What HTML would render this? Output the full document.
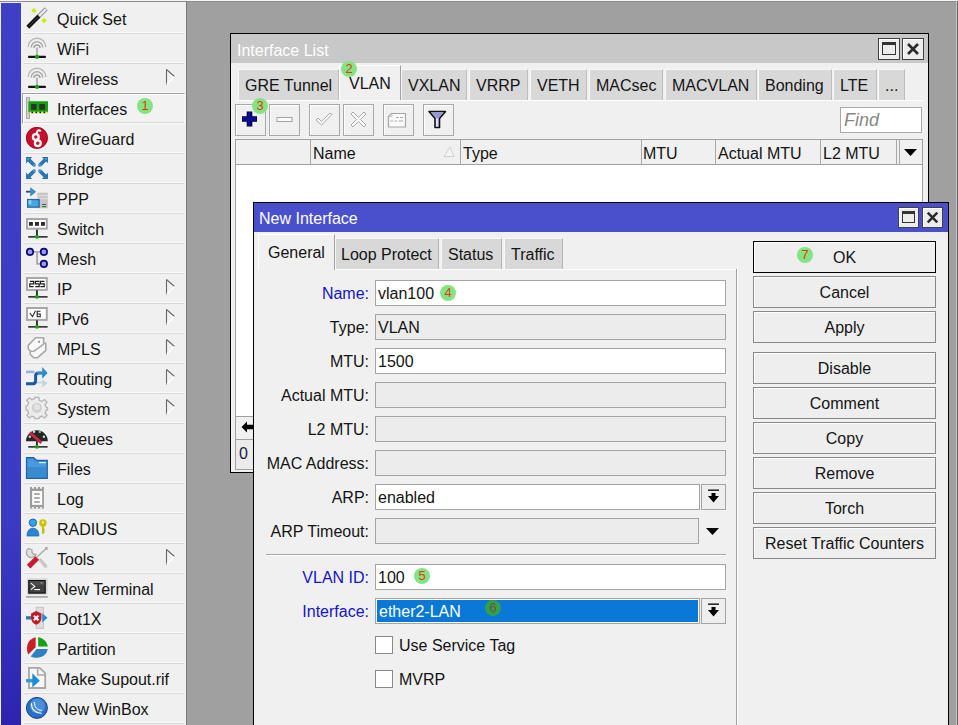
<!DOCTYPE html>
<html><head><meta charset="utf-8"><style>
*{margin:0;padding:0;box-sizing:border-box}
html,body{width:958px;height:725px;overflow:hidden;background:#a0a0a0;font-family:"Liberation Sans",sans-serif;font-size:16px;color:#111}
.a{position:absolute}
.t{position:absolute;font-size:16px;line-height:18px;white-space:nowrap;color:#141414}
svg{position:absolute;overflow:visible}
.badge{position:absolute;width:16px;height:16px;border-radius:50%;background:#84e484;color:#e03a10;font-size:13px;line-height:16px;text-align:center}
</style></head><body>
<div class="a" style="left:0px;top:0px;width:958px;height:1px;background:#f4f4f4"></div>
<div class="a" style="left:0px;top:1px;width:958px;height:1px;background:#8c8c8c"></div>
<div class="a" style="left:0px;top:2px;width:22px;height:723px;background:#f0f0f0"></div>
<div class="a" style="left:1px;top:3px;width:20px;height:722px;background:linear-gradient(#3e3ec6 0%,#3b3ac4 72%,#2c24b0 100%)"></div>
<div class="a" style="left:22px;top:2px;width:164px;height:723px;background:#f0f0f0"></div>
<div class="a" style="left:186px;top:1px;width:1px;height:724px;background:#787878"></div>
<div class="a" style="left:956px;top:1px;width:1px;height:724px;background:#c4c4c4"></div>
<div class="a" style="left:957px;top:1px;width:1px;height:724px;background:#6a6a6a"></div>
<div class="a" style="left:24px;top:32px;width:160px;height:1px;background:#fafafa"></div>
<div class="a" style="left:24px;top:33px;width:160px;height:1px;background:#d8d8d8"></div>
<div class="t" style="left:57px;top:11px;">Quick Set</div>
<svg style="left:26px;top:7px" width="22" height="22" viewBox="0 0 22 22"><path d="M8 0.8 L9 2.8 L11 3.6 L9 4.4 L8 6.6 L7 4.4 L5 3.6 L7 2.8 Z" fill="#d4ea20"/><circle cx="8" cy="3.6" r="2.2" fill="#d4ea20"/><path d="M18 10.8 L19 12.8 L21 13.6 L19 14.4 L18 16.6 L17 14.4 L15 13.6 L17 12.8 Z" fill="#d4ea20"/><circle cx="18" cy="13.6" r="2.2" fill="#d4ea20"/><line x1="1.8" y1="20.2" x2="13" y2="9" stroke="#141414" stroke-width="4.2"/><line x1="2.6" y1="19.4" x2="12.5" y2="9.5" stroke="#3a3a3a" stroke-width="1"/><line x1="13" y1="9" x2="20.2" y2="1.8" stroke="#888" stroke-width="4.2"/><line x1="13.2" y1="8.8" x2="20" y2="2" stroke="#ececec" stroke-width="2.4"/></svg>
<div class="a" style="left:24px;top:62px;width:160px;height:1px;background:#fafafa"></div>
<div class="a" style="left:24px;top:63px;width:160px;height:1px;background:#d8d8d8"></div>
<div class="t" style="left:57px;top:41px;">WiFi</div>
<svg style="left:26px;top:37px" width="22" height="22" viewBox="0 0 22 22"><path d="M2.2 10 A8.8 8.8 0 0 1 19.8 10" fill="none" stroke="#b8b8b8" stroke-width="1.4"/><path d="M5.2 10.5 A5.8 5.8 0 0 1 16.8 10.5" fill="none" stroke="#a8a8a8" stroke-width="1.4"/><path d="M8 11 A3 3 0 0 1 14 11" fill="none" stroke="#a0a0a0" stroke-width="1.4"/><rect x="10.2" y="10.5" width="1.6" height="9" fill="#a8a8a8"/><rect x="2" y="18.8" width="18" height="2.2" rx="1" fill="#141414"/><circle cx="11" cy="19.9" r="2.1" fill="#18a018"/></svg>
<div class="a" style="left:24px;top:92px;width:160px;height:1px;background:#fafafa"></div>
<div class="a" style="left:24px;top:93px;width:160px;height:1px;background:#d8d8d8"></div>
<div class="t" style="left:57px;top:71px;">Wireless</div>
<svg style="left:26px;top:67px" width="22" height="22" viewBox="0 0 22 22"><path d="M2.2 10 A8.8 8.8 0 0 1 19.8 10" fill="none" stroke="#b8b8b8" stroke-width="1.4"/><path d="M5.2 10.5 A5.8 5.8 0 0 1 16.8 10.5" fill="none" stroke="#a8a8a8" stroke-width="1.4"/><path d="M8 11 A3 3 0 0 1 14 11" fill="none" stroke="#a0a0a0" stroke-width="1.4"/><rect x="10.2" y="10.5" width="1.6" height="9" fill="#a8a8a8"/><rect x="2" y="18.8" width="18" height="2.2" rx="1" fill="#141414"/><circle cx="11" cy="19.9" r="2.1" fill="#18a018"/></svg>
<svg style="left:165px;top:68px" width="11" height="18" viewBox="0 0 11 18"><path d="M1.5 1.5 L1.5 17" stroke="#6a6a6a" stroke-width="1.1"/><path d="M1.5 1.5 L9.5 8.5" stroke="#6a6a6a" stroke-width="1.1"/><path d="M9.5 8.5 L1.5 16.5" stroke="#fff" stroke-width="1.2"/></svg>
<div class="a" style="left:22px;top:93px;width:163px;height:31px;background:#f2f2f2;border-top:1px solid #a0a0a0;border-left:1px solid #a0a0a0;border-bottom:1px solid #fafafa;border-right:1px solid #fafafa;box-shadow:inset 1px 1px 0 #fcfcfc, inset 0 -1px 0 #dadada"></div>
<div class="t" style="left:57px;top:101px;">Interfaces</div>
<svg style="left:26px;top:97px" width="22" height="22" viewBox="0 0 22 22"><rect x="0.6" y="0.6" width="2.8" height="20.8" fill="#d4d4d4" stroke="#9a9a9a" stroke-width="0.9"/><rect x="2.4" y="4" width="19.6" height="11.4" fill="#14a014"/><rect x="2.4" y="4" width="19.6" height="1" fill="#3ac03a"/><rect x="5.2" y="7" width="5.3" height="5.8" fill="#263626"/><rect x="13.3" y="7" width="5.8" height="5.8" fill="#263626"/><rect x="3.5" y="14.6" width="18" height="1.6" fill="#d8f050"/><rect x="5.5" y="14.6" width="1.6" height="1.6" fill="#111"/><rect x="9.5" y="14.6" width="1.6" height="1.6" fill="#111"/><rect x="13.5" y="14.6" width="1.6" height="1.6" fill="#111"/><rect x="17.5" y="14.6" width="1.6" height="1.6" fill="#111"/></svg>
<div class="a" style="left:24px;top:152px;width:160px;height:1px;background:#fafafa"></div>
<div class="a" style="left:24px;top:153px;width:160px;height:1px;background:#d8d8d8"></div>
<div class="t" style="left:57px;top:131px;">WireGuard</div>
<svg style="left:26px;top:127px" width="22" height="22" viewBox="0 0 22 22"><circle cx="10.9" cy="10.9" r="10.9" fill="#c8102e"/><circle cx="10.9" cy="10.9" r="10.4" fill="none" stroke="#9a0a22" stroke-width="1"/><circle cx="9.8" cy="10" r="2.9" fill="none" stroke="#fff" stroke-width="2.3"/><circle cx="11.8" cy="16.3" r="2.9" fill="none" stroke="#fff" stroke-width="2.3"/><path d="M9.8 6.8 C11.5 6 10.5 4.5 12 3.5 C13 3 14 3.5 14.8 4.2" fill="none" stroke="#fff" stroke-width="2"/></svg>
<div class="a" style="left:24px;top:182px;width:160px;height:1px;background:#fafafa"></div>
<div class="a" style="left:24px;top:183px;width:160px;height:1px;background:#d8d8d8"></div>
<div class="t" style="left:57px;top:161px;">Bridge</div>
<svg style="left:26px;top:157px" width="22" height="22" viewBox="0 0 22 22"><g fill="#2a74b0"><path d="M0 0 L6.2 0 L4.4 1.8 L9.6 7 L9.6 9.5 L7 9.5 L1.8 4.4 L0 6.2 Z"/><path d="M0 0 L6.2 0 L4.4 1.8 L9.6 7 L9.6 9.5 L7 9.5 L1.8 4.4 L0 6.2 Z" transform="translate(22 0) scale(-1 1)"/><path d="M0 0 L6.2 0 L4.4 1.8 L9.6 7 L9.6 9.5 L7 9.5 L1.8 4.4 L0 6.2 Z" transform="translate(0 22) scale(1 -1)"/><path d="M0 0 L6.2 0 L4.4 1.8 L9.6 7 L9.6 9.5 L7 9.5 L1.8 4.4 L0 6.2 Z" transform="translate(22 22) scale(-1 -1)"/></g><g fill="#50a8d8"><circle cx="2" cy="2" r="1"/><circle cx="20" cy="2" r="1"/><circle cx="8" cy="8" r="1"/><circle cx="14" cy="8" r="1"/><circle cx="8" cy="14" r="1"/><circle cx="14" cy="14" r="1"/></g></svg>
<div class="a" style="left:24px;top:212px;width:160px;height:1px;background:#fafafa"></div>
<div class="a" style="left:24px;top:213px;width:160px;height:1px;background:#d8d8d8"></div>
<div class="t" style="left:57px;top:191px;">PPP</div>
<svg style="left:26px;top:187px" width="22" height="22" viewBox="0 0 22 22"><rect x="0" y="3.8" width="4.8" height="1.8" fill="#304a80"/><path d="M4.3 0.2 L10 4.7 L4.3 9.6 Z" fill="#2e7ab0"/><path d="M5.2 2.2 L8 4.7 L5.2 7.2 Z" fill="#4a9ad0"/><rect x="11.3" y="5.7" width="10.5" height="15.5" fill="#c4c4c4"/><rect x="11.3" y="8" width="10.5" height="1.2" fill="#dedede"/><rect x="11.3" y="11" width="10.5" height="1.2" fill="#dedede"/><rect x="16.2" y="17" width="4" height="1" fill="#555"/><rect x="16.2" y="19" width="4" height="1.2" fill="#2a8a20"/><rect x="1" y="11.9" width="12.8" height="8.9" fill="#1e6aa6"/><rect x="2.4" y="13.2" width="10" height="6.3" fill="#4aa4e0"/><rect x="2.4" y="13.2" width="3" height="4" fill="#8ad0f4"/></svg>
<div class="a" style="left:24px;top:242px;width:160px;height:1px;background:#fafafa"></div>
<div class="a" style="left:24px;top:243px;width:160px;height:1px;background:#d8d8d8"></div>
<div class="t" style="left:57px;top:221px;">Switch</div>
<svg style="left:26px;top:217px" width="22" height="22" viewBox="0 0 22 22"><rect x="1" y="2" width="19.8" height="9.7" fill="#fff" stroke="#a8a8a8" stroke-width="2"/><rect x="3" y="5" width="3.9" height="3.8" fill="#2a2a2a"/><rect x="9" y="5" width="3.9" height="3.8" fill="#2a2a2a"/><rect x="15" y="5" width="3.9" height="3.8" fill="#2a2a2a"/><rect x="10.1" y="12.7" width="1.7" height="6.5" fill="#1a1a1a"/><rect x="2.2" y="19" width="19.4" height="1.7" fill="#3a3a3a"/><circle cx="10.9" cy="19.8" r="2" fill="#18a018"/></svg>
<div class="a" style="left:24px;top:272px;width:160px;height:1px;background:#fafafa"></div>
<div class="a" style="left:24px;top:273px;width:160px;height:1px;background:#d8d8d8"></div>
<div class="t" style="left:57px;top:251px;">Mesh</div>
<svg style="left:26px;top:247px" width="22" height="22" viewBox="0 0 22 22"><path d="M7.5 4.9 L14.2 4.9 M11.1 4.9 L11.1 16.9 L14.2 16.9" fill="none" stroke="#a8a8a8" stroke-width="1.8"/><circle cx="4" cy="4.9" r="3.2" fill="#9a9af0" stroke="#0a0a78" stroke-width="1.7"/><circle cx="17.9" cy="4.9" r="3.2" fill="#9a9af0" stroke="#0a0a78" stroke-width="1.7"/><circle cx="17.9" cy="16.9" r="3.2" fill="#9a9af0" stroke="#0a0a78" stroke-width="1.7"/></svg>
<div class="a" style="left:24px;top:302px;width:160px;height:1px;background:#fafafa"></div>
<div class="a" style="left:24px;top:303px;width:160px;height:1px;background:#d8d8d8"></div>
<div class="t" style="left:57px;top:281px;">IP</div>
<svg style="left:26px;top:277px" width="22" height="22" viewBox="0 0 22 22"><rect x="1" y="1" width="19.8" height="11.9" fill="#fff" stroke="#a8a8a8" stroke-width="2"/><path d="M3.8 4.3 L7.6 4.3 L7.6 6.9 L3.8 6.9 L3.8 9.7 L7.6 9.7" fill="none" stroke="#1a1a1a" stroke-width="1.2"/><path d="M13.5 4.3 L9.3 4.3 L9.3 6.9 L13.2 6.9 L13.2 9.7 L9.3 9.7" fill="none" stroke="#1a1a1a" stroke-width="1.2"/><path d="M18.5 4.3 L14.4 4.3 L14.4 6.9 L18.2 6.9 L18.2 9.7 L14.4 9.7" fill="none" stroke="#1a1a1a" stroke-width="1.2"/><rect x="10.1" y="13.3" width="1.7" height="5.5" fill="#1a1a1a"/><rect x="2.2" y="19" width="19.4" height="1.7" fill="#3a3a3a"/><circle cx="10.9" cy="19.8" r="2" fill="#18a018"/></svg>
<svg style="left:165px;top:278px" width="11" height="18" viewBox="0 0 11 18"><path d="M1.5 1.5 L1.5 17" stroke="#6a6a6a" stroke-width="1.1"/><path d="M1.5 1.5 L9.5 8.5" stroke="#6a6a6a" stroke-width="1.1"/><path d="M9.5 8.5 L1.5 16.5" stroke="#fff" stroke-width="1.2"/></svg>
<div class="a" style="left:24px;top:332px;width:160px;height:1px;background:#fafafa"></div>
<div class="a" style="left:24px;top:333px;width:160px;height:1px;background:#d8d8d8"></div>
<div class="t" style="left:57px;top:311px;">IPv6</div>
<svg style="left:26px;top:307px" width="22" height="22" viewBox="0 0 22 22"><rect x="1" y="1" width="19.8" height="11.9" fill="#fff" stroke="#a8a8a8" stroke-width="2"/><path d="M3.8 6 L6.5 9.5 L9.5 3.8" fill="none" stroke="#222" stroke-width="1.1"/><path d="M14.5 4.3 L11.2 4.3 L11.2 9.7 L14.2 9.7 L14.2 7 L11.2 7" fill="none" stroke="#222" stroke-width="1.1"/><rect x="10.1" y="13.3" width="1.7" height="5.5" fill="#1a1a1a"/><rect x="2.2" y="19" width="19.4" height="1.7" fill="#3a3a3a"/><circle cx="10.9" cy="19.8" r="2" fill="#18a018"/></svg>
<svg style="left:165px;top:308px" width="11" height="18" viewBox="0 0 11 18"><path d="M1.5 1.5 L1.5 17" stroke="#6a6a6a" stroke-width="1.1"/><path d="M1.5 1.5 L9.5 8.5" stroke="#6a6a6a" stroke-width="1.1"/><path d="M9.5 8.5 L1.5 16.5" stroke="#fff" stroke-width="1.2"/></svg>
<div class="a" style="left:24px;top:362px;width:160px;height:1px;background:#fafafa"></div>
<div class="a" style="left:24px;top:363px;width:160px;height:1px;background:#d8d8d8"></div>
<div class="t" style="left:57px;top:341px;">MPLS</div>
<svg style="left:26px;top:337px" width="22" height="22" viewBox="0 0 22 22"><path d="M4.3 14.8 L4.3 17.5 L8 20.8 L11.3 20.8 L19.8 13.3 L19.8 6.3 L17.7 6.3" fill="#f8f8f8" stroke="#a8a8a8" stroke-width="1.6" stroke-linejoin="round"/><path d="M9.6 0.8 L17.7 0.8 L17.7 7.1 L8 14.2 L4.3 14.2 L2.2 11.7 L2.2 8.4 Z" fill="#f8f8f8" stroke="#a8a8a8" stroke-width="1.6" stroke-linejoin="round"/><rect x="12.2" y="3.9" width="1.8" height="1.8" fill="#888"/></svg>
<svg style="left:165px;top:338px" width="11" height="18" viewBox="0 0 11 18"><path d="M1.5 1.5 L1.5 17" stroke="#6a6a6a" stroke-width="1.1"/><path d="M1.5 1.5 L9.5 8.5" stroke="#6a6a6a" stroke-width="1.1"/><path d="M9.5 8.5 L1.5 16.5" stroke="#fff" stroke-width="1.2"/></svg>
<div class="a" style="left:24px;top:392px;width:160px;height:1px;background:#fafafa"></div>
<div class="a" style="left:24px;top:393px;width:160px;height:1px;background:#d8d8d8"></div>
<div class="t" style="left:57px;top:371px;">Routing</div>
<svg style="left:26px;top:367px" width="22" height="22" viewBox="0 0 22 22"><path d="M0 4.9 L8.4 4.9" stroke="#8cb8dc" stroke-width="2.6"/><path d="M16.2 12.5 L21.6 16.2 L16.2 20.3 Z" fill="#bcd4e0"/><path d="M9 15.5 L16.5 15.5" stroke="#c4d8e8" stroke-width="1.8"/><path d="M0 16.7 L7 16.7 C9 16.7 9.6 15.8 9.6 13.5 L9.6 9 C9.6 6.8 10.6 5.9 12.6 5.9 L16.5 5.9" fill="none" stroke="#1e58a0" stroke-width="3"/><path d="M16.2 0.1 L21.6 5.9 L16.2 11.7 Z" fill="#2a8ad0"/><path d="M16.5 5.9 L11 5.9" stroke="#30a0e0" stroke-width="1.4"/></svg>
<svg style="left:165px;top:368px" width="11" height="18" viewBox="0 0 11 18"><path d="M1.5 1.5 L1.5 17" stroke="#6a6a6a" stroke-width="1.1"/><path d="M1.5 1.5 L9.5 8.5" stroke="#6a6a6a" stroke-width="1.1"/><path d="M9.5 8.5 L1.5 16.5" stroke="#fff" stroke-width="1.2"/></svg>
<div class="a" style="left:24px;top:422px;width:160px;height:1px;background:#fafafa"></div>
<div class="a" style="left:24px;top:423px;width:160px;height:1px;background:#d8d8d8"></div>
<div class="t" style="left:57px;top:401px;">System</div>
<svg style="left:26px;top:397px" width="22" height="22" viewBox="0 0 22 22"><path d="M9 0.3 L12.8 0.3 L13.3 3.4 L15.9 4.5 L18.5 2.6 L21 5.1 L19.1 7.7 L20.2 10.3 L21.6 10.8 L21.6 12.8 L20.2 13.3 L19.1 15.9 L21 18.5 L18.5 21 L15.9 19.1 L13.3 20.2 L12.8 21.6 L9 21.6 L8.5 20.2 L5.9 19.1 L3.3 21 L0.8 18.5 L2.7 15.9 L1.6 13.3 L0 12.8 L0 9 L1.6 8.5 L2.7 5.9 L0.8 3.3 L3.3 0.8 L5.9 2.7 L8.5 1.6 Z" fill="#ececec" stroke="#b4b4b4" stroke-width="1.3"/><circle cx="10.9" cy="10.9" r="5" fill="#d0d0d0"/><circle cx="10.9" cy="10.2" r="3" fill="#e4e4e4"/></svg>
<svg style="left:165px;top:398px" width="11" height="18" viewBox="0 0 11 18"><path d="M1.5 1.5 L1.5 17" stroke="#6a6a6a" stroke-width="1.1"/><path d="M1.5 1.5 L9.5 8.5" stroke="#6a6a6a" stroke-width="1.1"/><path d="M9.5 8.5 L1.5 16.5" stroke="#fff" stroke-width="1.2"/></svg>
<div class="a" style="left:24px;top:452px;width:160px;height:1px;background:#fafafa"></div>
<div class="a" style="left:24px;top:453px;width:160px;height:1px;background:#d8d8d8"></div>
<div class="t" style="left:57px;top:431px;">Queues</div>
<svg style="left:26px;top:427px" width="22" height="22" viewBox="0 0 22 22"><path d="M0 14.2 A10.9 10.9 0 0 1 21.8 14.2 Z" fill="#252525"/><circle cx="3.8" cy="9.8" r="1.2" fill="#d8d8d8"/><circle cx="8" cy="4.7" r="1.2" fill="#d8d8d8"/><circle cx="13.8" cy="4.9" r="1.2" fill="#60c8a8"/><circle cx="17.9" cy="9.8" r="1.2" fill="#d8d8d8"/><path d="M3.8 5.5 L15.4 15.8" stroke="#d02448" stroke-width="3"/><rect x="10.1" y="14.2" width="1.7" height="5" fill="#1a1a1a"/><rect x="2.2" y="19" width="19.4" height="1.7" fill="#3a3a3a"/><circle cx="10.9" cy="19.8" r="2" fill="#18a018"/></svg>
<div class="a" style="left:24px;top:482px;width:160px;height:1px;background:#fafafa"></div>
<div class="a" style="left:24px;top:483px;width:160px;height:1px;background:#d8d8d8"></div>
<div class="t" style="left:57px;top:461px;">Files</div>
<svg style="left:26px;top:457px" width="22" height="22" viewBox="0 0 22 22"><path d="M0.5 0.6 L7.6 0.6 L10.9 3.4 L21.3 3.4 L21.3 21.3 L0.5 21.3 Z" fill="#3a8ad2" stroke="#1e64a4" stroke-width="1.2"/><path d="M1.5 2 L7 2 L10 5 L20 5 L20 10 L1.5 10 Z" fill="#5aa8e8" opacity="0.5"/><rect x="12.9" y="5" width="7" height="1.2" fill="#c8f4ff"/></svg>
<div class="a" style="left:24px;top:512px;width:160px;height:1px;background:#fafafa"></div>
<div class="a" style="left:24px;top:513px;width:160px;height:1px;background:#d8d8d8"></div>
<div class="t" style="left:57px;top:491px;">Log</div>
<svg style="left:26px;top:487px" width="22" height="22" viewBox="0 0 22 22"><rect x="4" y="0" width="13.9" height="21.6" fill="#9c9c9c"/><rect x="6.1" y="4" width="10.1" height="13.9" fill="#fafafa"/><rect x="8.2" y="6.2" width="5.6" height="1.6" fill="#9c9c9c"/><rect x="8.2" y="10.2" width="5.6" height="1.6" fill="#9c9c9c"/><rect x="8.2" y="14.2" width="5.6" height="1.6" fill="#9c9c9c"/><g fill="#f0f0f0"><rect x="6" y="0" width="2" height="1.6"/><rect x="10" y="0" width="2" height="1.6"/><rect x="14" y="0" width="2" height="1.6"/><rect x="6" y="20" width="2" height="1.6"/><rect x="10" y="20" width="2" height="1.6"/><rect x="14" y="20" width="2" height="1.6"/></g></svg>
<div class="a" style="left:24px;top:542px;width:160px;height:1px;background:#fafafa"></div>
<div class="a" style="left:24px;top:543px;width:160px;height:1px;background:#d8d8d8"></div>
<div class="t" style="left:57px;top:521px;">RADIUS</div>
<svg style="left:26px;top:517px" width="22" height="22" viewBox="0 0 22 22"><circle cx="6.9" cy="5.7" r="3.7" fill="#34a0f0" stroke="#1a5a98" stroke-width="0.9"/><path d="M1 19.1 C1 13.5 3.5 11.3 6.9 11.3 C10.3 11.3 12.9 13.5 12.9 19.1 Z" fill="#2a84d4" stroke="#1a5a98" stroke-width="0.6"/><circle cx="16.9" cy="5.9" r="3.7" fill="#c8c400"/><circle cx="16.9" cy="5.4" r="1.1" fill="#f4f4c4"/><rect x="16" y="9" width="1.9" height="7.7" fill="#c0bc00"/><rect x="17.8" y="12" width="1.2" height="1.1" fill="#c0bc00"/><rect x="17.8" y="14.2" width="1.2" height="1.1" fill="#c0bc00"/></svg>
<div class="a" style="left:24px;top:572px;width:160px;height:1px;background:#fafafa"></div>
<div class="a" style="left:24px;top:573px;width:160px;height:1px;background:#d8d8d8"></div>
<div class="t" style="left:57px;top:551px;">Tools</div>
<svg style="left:26px;top:547px" width="22" height="22" viewBox="0 0 22 22"><path d="M12.5 13 L14.5 11 L21 17.8 L21 20.8 L18.5 20.8 Z" fill="#c8c8c8"/><path d="M11 10 L20.2 1.5" stroke="#a8a8a8" stroke-width="1.4"/><rect x="19" y="0" width="2.8" height="2.8" fill="#b0b0b0"/><path d="M2.5 1.5 A5 5 0 1 0 10 7.5 L7.8 7.5 L6 5.5 L6 3 Z" fill="#e0e0e0" stroke="#a8a8a8" stroke-width="1.3"/><path d="M2.6 19.6 L11.3 11" stroke="#c81a30" stroke-width="5"/></svg>
<svg style="left:165px;top:548px" width="11" height="18" viewBox="0 0 11 18"><path d="M1.5 1.5 L1.5 17" stroke="#6a6a6a" stroke-width="1.1"/><path d="M1.5 1.5 L9.5 8.5" stroke="#6a6a6a" stroke-width="1.1"/><path d="M9.5 8.5 L1.5 16.5" stroke="#fff" stroke-width="1.2"/></svg>
<div class="a" style="left:24px;top:602px;width:160px;height:1px;background:#fafafa"></div>
<div class="a" style="left:24px;top:603px;width:160px;height:1px;background:#d8d8d8"></div>
<div class="t" style="left:57px;top:581px;">New Terminal</div>
<svg style="left:26px;top:577px" width="22" height="22" viewBox="0 0 22 22"><rect x="1" y="1.4" width="20.6" height="16.3" fill="#d4d4d4"/><rect x="2.2" y="3" width="17.6" height="13.7" fill="#101010"/><rect x="3.4" y="4.2" width="15.2" height="11.3" fill="#404040"/><rect x="3.4" y="4.2" width="15.2" height="4" fill="#4c4c4c"/><path d="M4.9 6.1 L8.8 9.4 L4.9 12.7" fill="none" stroke="#fff" stroke-width="1.1"/><rect x="8.2" y="12" width="5.8" height="1.1" fill="#fff"/><rect x="14.5" y="5.5" width="2" height="1" fill="#aaa"/><rect x="0" y="19" width="21.8" height="1.8" fill="#a8a8a8"/></svg>
<div class="a" style="left:24px;top:632px;width:160px;height:1px;background:#fafafa"></div>
<div class="a" style="left:24px;top:633px;width:160px;height:1px;background:#d8d8d8"></div>
<div class="t" style="left:57px;top:611px;">Dot1X</div>
<svg style="left:26px;top:607px" width="22" height="22" viewBox="0 0 22 22"><rect x="10" y="0.2" width="7.7" height="21.4" fill="#dcdcdc" stroke="#b4b4b4" stroke-width="0.6"/><rect x="0" y="9.2" width="5.6" height="3.3" fill="#2a78b4"/><path d="M16.2 6.3 L21.6 10.8 L16.2 15.4 Z" fill="#2a8cd0"/><path d="M5.1 6.5 L10.2 4 L15.4 6.5 L15.4 11 C15.4 14.5 13 16.5 10.2 17.8 C7.4 16.5 5.1 14.5 5.1 11 Z" fill="#c41828"/><path d="M7.9 8.6 L12.5 13.2 M12.5 8.6 L7.9 13.2" stroke="#fff" stroke-width="2"/></svg>
<div class="a" style="left:24px;top:662px;width:160px;height:1px;background:#fafafa"></div>
<div class="a" style="left:24px;top:663px;width:160px;height:1px;background:#d8d8d8"></div>
<div class="t" style="left:57px;top:641px;">Partition</div>
<svg style="left:26px;top:637px" width="22" height="22" viewBox="0 0 22 22"><path d="M9.6 0.2 C4.5 1.5 1 5.5 1 11 C1 13.5 1.5 15.5 2.2 17.5 L9.6 10.2 Z" fill="#c81e28"/><path d="M12.1 0.2 C17 0.8 21 4.5 21.8 9.5 L12.1 9.5 Z" fill="#18a018"/><path d="M21.8 12.1 C21 17 16.5 20.8 11 20.8 C8.5 20.8 6.5 20.3 4.7 19.5 L10.5 12.1 Z" fill="#3080c4"/></svg>
<div class="a" style="left:24px;top:692px;width:160px;height:1px;background:#fafafa"></div>
<div class="a" style="left:24px;top:693px;width:160px;height:1px;background:#d8d8d8"></div>
<div class="t" style="left:57px;top:671px;">Make Supout.rif</div>
<svg style="left:26px;top:667px" width="22" height="22" viewBox="0 0 22 22"><path d="M2.9 0.9 L13.6 0.9 L19.2 6.2 L19.2 21 L2.9 21 Z" fill="#f6f6f6" stroke="#a8a8a8" stroke-width="1.8"/><path d="M11.7 1.2 L11.7 8 L19 8" fill="none" stroke="#a8a8a8" stroke-width="1.6"/><rect x="0" y="12.1" width="7" height="3.3" fill="#2a9ad8"/><path d="M6.3 6.3 L13.8 13.8 L6.3 20.4 Z" fill="#1e8cd0"/></svg>
<div class="a" style="left:24px;top:722px;width:160px;height:1px;background:#fafafa"></div>
<div class="a" style="left:24px;top:723px;width:160px;height:1px;background:#d8d8d8"></div>
<div class="t" style="left:57px;top:701px;">New WinBox</div>
<svg style="left:26px;top:697px" width="22" height="22" viewBox="0 0 22 22"><circle cx="10.9" cy="10.9" r="10.5" fill="#2a6ec4" stroke="#1a4288" stroke-width="1"/><circle cx="11.5" cy="9" r="7.5" fill="#6aaaf0" opacity="0.55"/><path d="M5.5 6 C5.2 12.5 9.5 16.5 15.8 16.2" fill="none" stroke="#fff" stroke-width="1.1"/><path d="M8.4 5 C8.4 10 11 13.3 15.8 13.3" fill="none" stroke="#fff" stroke-width="1"/></svg>
<div class="badge" style="left:137px;top:98px">1</div>
<div class="a" style="left:230px;top:33px;width:699px;height:440px;background:#000"></div>
<div class="a" style="left:231px;top:34px;width:697px;height:438px;background:#f0f0f0"></div>
<div class="a" style="left:231px;top:34px;width:697px;height:29px;background:#c8c8c8"></div>
<div class="t" style="left:237px;top:42px;color:#fff;font-size:16px">Interface List</div>
<div class="a" style="left:878px;top:38px;width:22px;height:22px;background:#ececec;border:1px solid #404040;box-shadow:inset 1px 1px 0 #fff"></div>
<div class="a" style="left:882px;top:42px;width:14px;height:13px;border:1.5px solid #333;border-top-width:3.5px"></div>
<div class="a" style="left:902px;top:38px;width:22px;height:22px;background:#ececec;border:1px solid #404040;box-shadow:inset 1px 1px 0 #fff"></div>
<svg style="left:902px;top:38px" width="22" height="22" viewBox="0 0 22 22"><path d="M6 6 L16 16 M16 6 L6 16" stroke="#2a2a2a" stroke-width="2.6"/></svg>
<div class="a" style="left:238px;top:69px;width:101px;height:31px;background:#d8d8d8;border-top:1px solid #f8f8f8;border-left:1px solid #f8f8f8;border-right:1px solid #bcbcbc"></div>
<div class="t" style="left:245px;top:77px;">GRE Tunnel</div>
<div class="a" style="left:339px;top:65px;width:62px;height:36px;background:#f0f0f0;border-left:1px solid #fff;border-top:1px solid #fff;border-right:1px solid #a0a0a0"></div>
<div class="t" style="left:349px;top:75px;">VLAN</div>
<div class="a" style="left:401px;top:69px;width:66px;height:31px;background:#d8d8d8;border-top:1px solid #f8f8f8;border-left:1px solid #f8f8f8;border-right:1px solid #bcbcbc"></div>
<div class="t" style="left:408px;top:77px;">VXLAN</div>
<div class="a" style="left:469px;top:69px;width:59px;height:31px;background:#d8d8d8;border-top:1px solid #f8f8f8;border-left:1px solid #f8f8f8;border-right:1px solid #bcbcbc"></div>
<div class="t" style="left:476px;top:77px;">VRRP</div>
<div class="a" style="left:530px;top:69px;width:57px;height:31px;background:#d8d8d8;border-top:1px solid #f8f8f8;border-left:1px solid #f8f8f8;border-right:1px solid #bcbcbc"></div>
<div class="t" style="left:537px;top:77px;">VETH</div>
<div class="a" style="left:589px;top:69px;width:74px;height:31px;background:#d8d8d8;border-top:1px solid #f8f8f8;border-left:1px solid #f8f8f8;border-right:1px solid #bcbcbc"></div>
<div class="t" style="left:596px;top:77px;">MACsec</div>
<div class="a" style="left:665px;top:69px;width:92px;height:31px;background:#d8d8d8;border-top:1px solid #f8f8f8;border-left:1px solid #f8f8f8;border-right:1px solid #bcbcbc"></div>
<div class="t" style="left:672px;top:77px;">MACVLAN</div>
<div class="a" style="left:758px;top:69px;width:74px;height:31px;background:#d8d8d8;border-top:1px solid #f8f8f8;border-left:1px solid #f8f8f8;border-right:1px solid #bcbcbc"></div>
<div class="t" style="left:765px;top:77px;">Bonding</div>
<div class="a" style="left:833px;top:69px;width:44px;height:31px;background:#d8d8d8;border-top:1px solid #f8f8f8;border-left:1px solid #f8f8f8;border-right:1px solid #bcbcbc"></div>
<div class="t" style="left:840px;top:77px;">LTE</div>
<div class="a" style="left:878px;top:69px;width:27px;height:31px;background:#d8d8d8;border-top:1px solid #f8f8f8;border-left:1px solid #f8f8f8;border-right:1px solid #bcbcbc"></div>
<div class="t" style="left:885px;top:77px;">...</div>
<div class="a" style="left:236px;top:100px;width:688px;height:1px;background:#fff"></div>
<div class="badge" style="left:341px;top:61px">2</div>
<div class="a" style="left:235px;top:104px;width:31px;height:32px;background:#f0f0f0;border:1px solid #a8a8a8;box-shadow:inset 1px 1px 0 #fff"></div>
<div class="a" style="left:269px;top:104px;width:31px;height:32px;background:#f0f0f0;border:1px solid #a8a8a8;box-shadow:inset 1px 1px 0 #fff"></div>
<div class="a" style="left:309px;top:104px;width:31px;height:32px;background:#f0f0f0;border:1px solid #a8a8a8;box-shadow:inset 1px 1px 0 #fff"></div>
<div class="a" style="left:343px;top:104px;width:31px;height:32px;background:#f0f0f0;border:1px solid #a8a8a8;box-shadow:inset 1px 1px 0 #fff"></div>
<div class="a" style="left:383px;top:104px;width:31px;height:32px;background:#f0f0f0;border:1px solid #a8a8a8;box-shadow:inset 1px 1px 0 #fff"></div>
<div class="a" style="left:423px;top:104px;width:31px;height:32px;background:#f0f0f0;border:1px solid #a8a8a8;box-shadow:inset 1px 1px 0 #fff"></div>
<svg style="left:235px;top:104px" width="31" height="32" viewBox="0 0 31 32"><path d="M7 15 L22 15 M14.5 7.5 L14.5 22.5" stroke="#000" stroke-width="5.6"/><path d="M7.6 15 L21.4 15 M14.5 8.1 L14.5 21.9" stroke="#0a0aa0" stroke-width="3.8"/></svg>
<svg style="left:269px;top:104px" width="31" height="32" viewBox="0 0 31 32"><rect x="8" y="13.5" width="15" height="4" fill="#fafafa" stroke="#a4a4a4"/></svg>
<svg style="left:309px;top:104px" width="31" height="32" viewBox="0 0 31 32"><path d="M7 16 L12.5 21 L23 10.5 L21 9 L12.5 17.5 L9 14 Z" fill="#fafafa" stroke="#a8a8a8" stroke-width="1"/></svg>
<svg style="left:343px;top:104px" width="31" height="32" viewBox="0 0 31 32"><path d="M8 10 L10 8 L15.5 13.5 L21 8 L23 10 L17.5 15.5 L23 21 L21 23 L15.5 17.5 L10 23 L8 21 L13.5 15.5 Z" fill="#fafafa" stroke="#a8a8a8" stroke-width="1"/></svg>
<svg style="left:383px;top:104px" width="31" height="32" viewBox="0 0 31 32"><path d="M5.5 12.5 L8.5 9.5 L22.5 9.5 L22.5 23 L5.5 23 Z" fill="#fafafa" stroke="#a8a8a8" stroke-width="1.2"/><path d="M6 12.5 L9 12.5 L9 9.8" fill="none" stroke="#b8b8b8" stroke-width="0.8"/><path d="M13 13.5 L15.5 13.5 M17 13.5 L20 13.5 M7.5 17 L10 17 M11.5 17 L14 17 M15.5 17 L20 17" stroke="#a8a8a8" stroke-width="1.2"/></svg>
<svg style="left:423px;top:104px" width="31" height="32" viewBox="0 0 31 32"><path d="M6 7.5 L22.5 7.5 L16.5 14.5 L16.5 23.5 L12 23.5 L12 14.5 Z" fill="#c8c8f0" stroke="#111" stroke-width="1.6" stroke-linejoin="round"/><path d="M8.5 9 L20 9 L15.5 14 L13 14 Z" fill="#8080d0" opacity="0.7"/><rect x="13" y="15" width="1.5" height="7.5" fill="#e8e8ff"/></svg>
<div class="badge" style="left:252px;top:98px">3</div>
<div class="a" style="left:840px;top:107px;width:82px;height:26px;background:#fff;border:1px solid #a8a8a8"></div>
<div class="t" style="left:844px;top:110px;font-style:italic;color:#888;font-size:18px;line-height:20px">Find</div>
<div class="a" style="left:235px;top:139px;width:688px;height:331px;background:#fff;border:1px solid #a0a0a0"></div>
<div class="a" style="left:236px;top:140px;width:686px;height:25px;background:#f0f0f0;border-bottom:1px solid #a0a0a0"></div>
<div class="a" style="left:310px;top:140px;width:1px;height:25px;background:#a8a8a8"></div>
<div class="a" style="left:460px;top:140px;width:1px;height:25px;background:#a8a8a8"></div>
<div class="a" style="left:641px;top:140px;width:1px;height:25px;background:#a8a8a8"></div>
<div class="a" style="left:715px;top:140px;width:1px;height:25px;background:#a8a8a8"></div>
<div class="a" style="left:820px;top:140px;width:1px;height:25px;background:#a8a8a8"></div>
<div class="a" style="left:896px;top:140px;width:1px;height:25px;background:#a8a8a8"></div>
<div class="a" style="left:899px;top:140px;width:1px;height:25px;background:#a8a8a8"></div>
<div class="t" style="left:313px;top:145px;">Name</div>
<div class="t" style="left:463px;top:145px;">Type</div>
<div class="t" style="left:643px;top:145px;">MTU</div>
<div class="t" style="left:718px;top:145px;">Actual MTU</div>
<div class="t" style="left:823px;top:145px;">L2 MTU</div>
<svg style="left:440px;top:144px" width="16" height="16" viewBox="0 0 16 16"><path d="M4 12.5 L10 3 L14 12.5 Z" fill="#f4f4f4" stroke="#d0d0d0" stroke-width="1"/></svg>
<svg style="left:899px;top:140px" width="23" height="25" viewBox="0 0 23 25"><path d="M5 9 L18 9 L11.5 16 Z" fill="#000"/></svg>
<div class="a" style="left:236px;top:416px;width:686px;height:24px;background:#f0f0f0;border-top:1px solid #a0a0a0"></div>
<svg style="left:236px;top:416px" width="22" height="22" viewBox="0 0 22 22"><path d="M5.5 11 L11 5.5 L11 8.8 L17 8.8 L17 13.2 L11 13.2 L11 16.5 Z" fill="#000"/></svg>
<div class="a" style="left:236px;top:439px;width:686px;height:30px;background:#ebebeb;border-top:1px solid #a0a0a0"></div>
<div class="t" style="left:239px;top:445px;color:#1a1a40">0 items</div>
<div class="a" style="left:253px;top:202px;width:696px;height:540px;background:#000"></div>
<div class="a" style="left:254px;top:203px;width:694px;height:540px;background:#f0f0f0"></div>
<div class="a" style="left:254px;top:203px;width:694px;height:29px;background:#4a50cc"></div>
<div class="t" style="left:259px;top:210px;color:#fff">New Interface</div>
<div class="a" style="left:898px;top:207px;width:21px;height:21px;background:#ececec;border:1px solid #404040;box-shadow:inset 1px 1px 0 #fff"></div>
<div class="a" style="left:902px;top:211px;width:13px;height:12px;border:1.5px solid #333;border-top-width:3.5px"></div>
<div class="a" style="left:922px;top:207px;width:21px;height:21px;background:#ececec;border:1px solid #404040;box-shadow:inset 1px 1px 0 #fff"></div>
<svg style="left:922px;top:207px" width="21" height="21" viewBox="0 0 22 22"><path d="M6 6 L16 16 M16 6 L6 16" stroke="#2a2a2a" stroke-width="2.6"/></svg>
<div class="a" style="left:258px;top:234px;width:77px;height:36px;background:#f0f0f0;border-left:1px solid #fff;border-top:1px solid #fff;border-right:1px solid #a0a0a0"></div>
<div class="t" style="left:268px;top:244px;">General</div>
<div class="a" style="left:335px;top:238px;width:104px;height:31px;background:#d8d8d8;border-top:1px solid #f8f8f8;border-left:1px solid #f8f8f8;border-right:1px solid #b4b4b4"></div>
<div class="t" style="left:341px;top:246px;">Loop Protect</div>
<div class="a" style="left:441px;top:238px;width:61px;height:31px;background:#d8d8d8;border-top:1px solid #f8f8f8;border-left:1px solid #f8f8f8;border-right:1px solid #b4b4b4"></div>
<div class="t" style="left:448px;top:246px;">Status</div>
<div class="a" style="left:504px;top:238px;width:59px;height:31px;background:#d8d8d8;border-top:1px solid #f8f8f8;border-left:1px solid #f8f8f8;border-right:1px solid #b4b4b4"></div>
<div class="t" style="left:511px;top:246px;">Traffic</div>
<div class="badge" style="left:0;top:0;display:none"></div>
<div class="a" style="left:335px;top:269px;width:401px;height:1px;background:#fff"></div>
<div class="a" style="left:736px;top:269px;width:1px;height:456px;background:#a0a0a0"></div>
<div class="a" style="left:737px;top:269px;width:1px;height:456px;background:#fff"></div>
<div class="a" style="left:753px;top:241px;width:183px;height:32px;background:#eeeeee;border:1px solid #000;box-shadow:inset 1px 1px 0 #fff;text-align:center;line-height:32px;font-size:16px;color:#141414">OK</div>
<div class="a" style="left:753px;top:276px;width:183px;height:32px;background:#eeeeee;border:1px solid #888888;box-shadow:inset 1px 1px 0 #fff;text-align:center;line-height:32px;font-size:16px;color:#141414">Cancel</div>
<div class="a" style="left:753px;top:311px;width:183px;height:32px;background:#eeeeee;border:1px solid #888888;box-shadow:inset 1px 1px 0 #fff;text-align:center;line-height:32px;font-size:16px;color:#141414">Apply</div>
<div class="a" style="left:753px;top:352px;width:183px;height:32px;background:#eeeeee;border:1px solid #888888;box-shadow:inset 1px 1px 0 #fff;text-align:center;line-height:32px;font-size:16px;color:#141414">Disable</div>
<div class="a" style="left:753px;top:387px;width:183px;height:32px;background:#eeeeee;border:1px solid #888888;box-shadow:inset 1px 1px 0 #fff;text-align:center;line-height:32px;font-size:16px;color:#141414">Comment</div>
<div class="a" style="left:753px;top:422px;width:183px;height:32px;background:#eeeeee;border:1px solid #888888;box-shadow:inset 1px 1px 0 #fff;text-align:center;line-height:32px;font-size:16px;color:#141414">Copy</div>
<div class="a" style="left:753px;top:457px;width:183px;height:32px;background:#eeeeee;border:1px solid #888888;box-shadow:inset 1px 1px 0 #fff;text-align:center;line-height:32px;font-size:16px;color:#141414">Remove</div>
<div class="a" style="left:753px;top:492px;width:183px;height:32px;background:#eeeeee;border:1px solid #888888;box-shadow:inset 1px 1px 0 #fff;text-align:center;line-height:32px;font-size:16px;color:#141414">Torch</div>
<div class="a" style="left:753px;top:527px;width:183px;height:32px;background:#eeeeee;border:1px solid #888888;box-shadow:inset 1px 1px 0 #fff;text-align:center;line-height:32px;font-size:16px;color:#141414">Reset Traffic Counters</div>
<div class="badge" style="left:797px;top:247px">7</div>
<div class="t" style="left:180px;width:189px;top:285px;text-align:right;color:#1414c8">Name:</div>
<div class="a" style="left:375px;top:280px;width:351px;height:26px;background:#fff;border:1px solid #a4a4a4"></div>
<div class="t" style="left:378px;top:285px;color:#141414">vlan100</div>
<div class="t" style="left:180px;width:189px;top:319px;text-align:right;color:#141414">Type:</div>
<div class="a" style="left:375px;top:314px;width:351px;height:26px;background:#ececec;border:1px solid #a4a4a4"></div>
<div class="t" style="left:378px;top:319px;color:#141414">VLAN</div>
<div class="t" style="left:180px;width:189px;top:353px;text-align:right;color:#141414">MTU:</div>
<div class="a" style="left:375px;top:348px;width:351px;height:26px;background:#fff;border:1px solid #a4a4a4"></div>
<div class="t" style="left:378px;top:353px;color:#141414">1500</div>
<div class="t" style="left:180px;width:189px;top:387px;text-align:right;color:#141414">Actual MTU:</div>
<div class="a" style="left:375px;top:382px;width:351px;height:26px;background:#ececec;border:1px solid #a4a4a4"></div>
<div class="t" style="left:180px;width:189px;top:421px;text-align:right;color:#141414">L2 MTU:</div>
<div class="a" style="left:375px;top:416px;width:351px;height:26px;background:#ececec;border:1px solid #a4a4a4"></div>
<div class="t" style="left:180px;width:189px;top:455px;text-align:right;color:#141414">MAC Address:</div>
<div class="a" style="left:375px;top:450px;width:351px;height:26px;background:#ececec;border:1px solid #a4a4a4"></div>
<div class="t" style="left:180px;width:189px;top:489px;text-align:right;color:#141414">ARP:</div>
<div class="a" style="left:375px;top:484px;width:325px;height:26px;background:#fff;border:1px solid #a4a4a4"></div>
<div class="a" style="left:701px;top:484px;width:25px;height:26px;background:#eeeeee;border:1px solid #a4a4a4"></div>
<svg style="left:701px;top:484px" width="25" height="26" viewBox="0 0 25 26"><rect x="7" y="5.5" width="11" height="1.3" fill="#000"/><path d="M10.5 9 L14.5 9 L14.5 12 L18 12 L12.5 18.5 L7 12 L10.5 12 Z" fill="#000"/></svg>
<div class="t" style="left:378px;top:489px;color:#141414">enabled</div>
<div class="t" style="left:180px;width:189px;top:523px;text-align:right;color:#141414">ARP Timeout:</div>
<div class="a" style="left:375px;top:518px;width:324px;height:26px;background:#ececec;border:1px solid #a4a4a4"></div>
<svg style="left:701px;top:518px" width="25" height="26" viewBox="0 0 25 26"><path d="M5 10 L18 10 L11.5 17 Z" fill="#000"/></svg>
<div class="t" style="left:180px;width:189px;top:569px;text-align:right;color:#1414c8">VLAN ID:</div>
<div class="a" style="left:375px;top:564px;width:351px;height:26px;background:#fff;border:1px solid #a4a4a4"></div>
<div class="t" style="left:378px;top:569px;color:#141414">100</div>
<div class="t" style="left:180px;width:189px;top:603px;text-align:right;color:#1414c8">Interface:</div>
<div class="a" style="left:375px;top:598px;width:325px;height:26px;background:#fff;border:1px solid #a4a4a4"></div>
<div class="a" style="left:377px;top:600px;width:321px;height:22px;background:#0a78d7"></div>
<div class="a" style="left:701px;top:598px;width:25px;height:26px;background:#eeeeee;border:1px solid #a4a4a4"></div>
<svg style="left:701px;top:598px" width="25" height="26" viewBox="0 0 25 26"><rect x="7" y="5.5" width="11" height="1.3" fill="#000"/><path d="M10.5 9 L14.5 9 L14.5 12 L18 12 L12.5 18.5 L7 12 L10.5 12 Z" fill="#000"/></svg>
<div class="t" style="left:379px;top:603px;color:#fff">ether2-LAN</div>
<div class="a" style="left:266px;top:554px;width:460px;height:1px;background:#a8a8a8"></div>
<div class="a" style="left:266px;top:555px;width:460px;height:1px;background:#fff"></div>
<div class="a" style="left:375px;top:636px;width:18px;height:18px;background:#fff;border:1px solid #8a8a8a"></div>
<div class="t" style="left:399px;top:637px;">Use Service Tag</div>
<div class="a" style="left:375px;top:670px;width:18px;height:18px;background:#fff;border:1px solid #8a8a8a"></div>
<div class="t" style="left:399px;top:671px;">MVRP</div>
<div class="badge" style="left:440px;top:285px">4</div>
<div class="badge" style="left:414px;top:568px">5</div>
<div class="badge" style="left:485px;top:600px;background:#30a050;color:#7a5040">6</div>
</body></html>
